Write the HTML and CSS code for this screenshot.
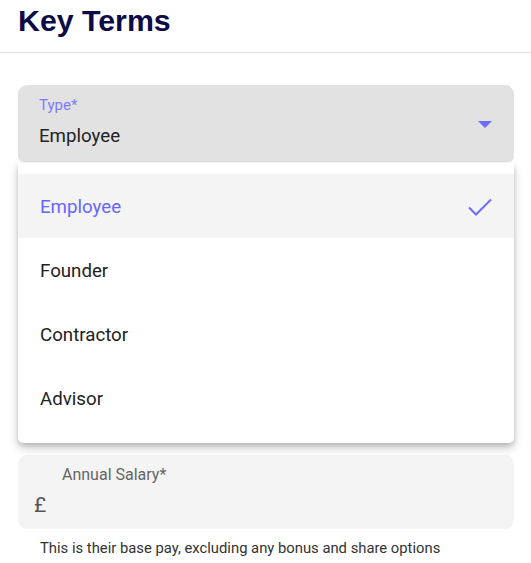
FILE: index.html
```html
<!DOCTYPE html>
<html>
<head>
<meta charset="utf-8">
<link rel="stylesheet" href="styles.css">
</head>
<body>
<header class="header">
  <h1 class="title">Key Terms</h1>
</header>
<main class="content">
  <div class="select-wrap">
    <div class="select">
      <div class="select-text">
        <span class="select-label">Type*</span>
        <span class="select-value">Employee</span>
      </div>
      <svg class="arrow" width="14" height="7" viewBox="0 0 14 7"><path d="M0 0h14L7 7z" fill="#6b6bff"/></svg>
    </div>
    <ul class="menu">
      <li class="item selected"><span>Employee</span>
        <svg class="check" width="24" height="18" viewBox="0 0 24 18"><path d="M1 9.5l7 7L23 1.5" fill="none" stroke="#6b6bff" stroke-width="2"/></svg>
      </li>
      <li class="item"><span>Founder</span></li>
      <li class="item"><span>Contractor</span></li>
      <li class="item"><span>Advisor</span></li>
    </ul>
  </div>
  <div class="salary">
    <span class="salary-label">Annual Salary*</span>
    <span class="currency">£</span>
  </div>
  <p class="helper">This is their base pay, excluding any bonus and share options</p>
</main>
</body>
</html>
```
FILE: styles.css
```css
* { box-sizing: border-box; }
html, body { margin: 0; padding: 0; background: #fff; }
body { font-family: Roboto, "Noto Sans", sans-serif; width: 531px; overflow: hidden; }
.header { border-bottom: 1px solid #e2e2e2; padding: 3px 18px 0; height: 53px; }
.title { margin: 0; font-family: "Liberation Sans", Arial, sans-serif; font-weight: 700; font-size: 30.3px; line-height: 36px; color: #0c0b47; }
.content { padding: 32px 17px 0 18px; }
.select-wrap { position: relative; }
.select { background: #e2e2e2; border-radius: 9px 9px 6px 6px; height: 77px; display: flex; align-items: center; padding: 0 22px 0 21px; }
.select-text { flex: 1; display: flex; flex-direction: column; align-self: flex-start; padding-top: 11px; }
.select-label { font-size: 15px; line-height: 18px; color: #7c7cff; }
.select-value { font-size: 18.7px; line-height: 24px; color: #222; margin-top: 10px; }
.arrow { margin-top: 2px; }
.menu { position: absolute; left: 0; right: 0; top: 78px; margin: 0; padding: 11px 0 13px; list-style: none; background: #fff; border-radius: 0 0 5px 5px; box-shadow: 0 5px 10px rgba(0,0,0,0.22), 0 2px 4px rgba(0,0,0,0.12); z-index: 2; }
.item { height: 64px; display: flex; align-items: center; justify-content: space-between; padding: 0 22px 0 22px; font-size: 18.7px; color: #222; }
.item span { margin-top: 1px; }
.item.selected { background: #f4f4f4; color: #6666ff; }
.check { margin-top: 1px; }
.salary { margin-top: 293px; background: #f4f4f4; border-radius: 9px; height: 74px; position: relative; padding: 10px 16px; display: flex; flex-direction: column; }
.salary-label { padding-left: 28px; font-size: 16px; line-height: 20px; color: #666; }
.currency { font-size: 21px; line-height: 26px; color: #555; margin-top: 7px; }
.helper { margin: 10px 0 0 22px; font-size: 14.8px; line-height: 18px; color: #333; }
```
